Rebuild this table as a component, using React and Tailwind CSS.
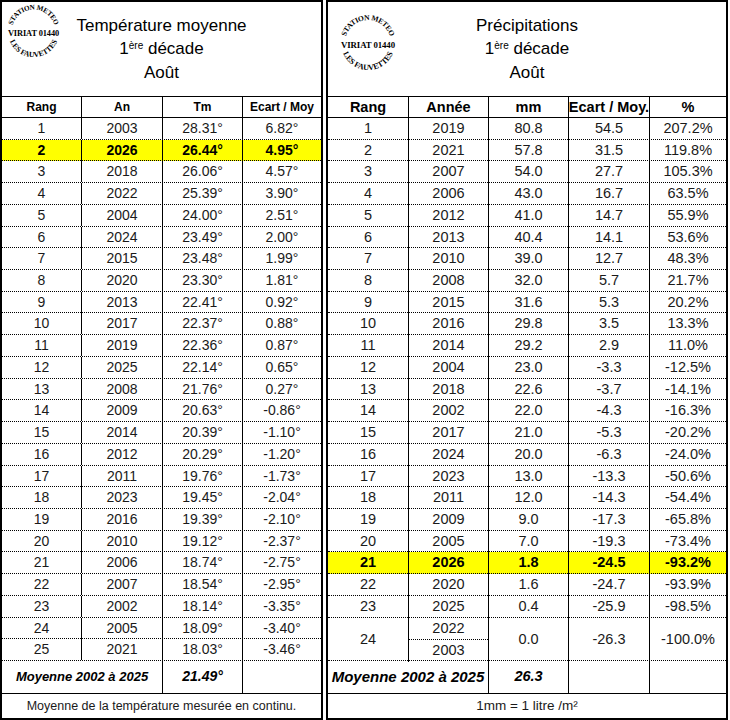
import { useId } from 'react'

const tempRows = [
  [1, '2003', '28.31°', '6.82°'],
  [2, '2026', '26.44°', '4.95°'],
  [3, '2018', '26.06°', '4.57°'],
  [4, '2022', '25.39°', '3.90°'],
  [5, '2004', '24.00°', '2.51°'],
  [6, '2024', '23.49°', '2.00°'],
  [7, '2015', '23.48°', '1.99°'],
  [8, '2020', '23.30°', '1.81°'],
  [9, '2013', '22.41°', '0.92°'],
  [10, '2017', '22.37°', '0.88°'],
  [11, '2019', '22.36°', '0.87°'],
  [12, '2025', '22.14°', '0.65°'],
  [13, '2008', '21.76°', '0.27°'],
  [14, '2009', '20.63°', '-0.86°'],
  [15, '2014', '20.39°', '-1.10°'],
  [16, '2012', '20.29°', '-1.20°'],
  [17, '2011', '19.76°', '-1.73°'],
  [18, '2023', '19.45°', '-2.04°'],
  [19, '2016', '19.39°', '-2.10°'],
  [20, '2010', '19.12°', '-2.37°'],
  [21, '2006', '18.74°', '-2.75°'],
  [22, '2007', '18.54°', '-2.95°'],
  [23, '2002', '18.14°', '-3.35°'],
  [24, '2005', '18.09°', '-3.40°'],
  [25, '2021', '18.03°', '-3.46°'],
]

const rainRows = [
  [1, '2019', '80.8', '54.5', '207.2%'],
  [2, '2021', '57.8', '31.5', '119.8%'],
  [3, '2007', '54.0', '27.7', '105.3%'],
  [4, '2006', '43.0', '16.7', '63.5%'],
  [5, '2012', '41.0', '14.7', '55.9%'],
  [6, '2013', '40.4', '14.1', '53.6%'],
  [7, '2010', '39.0', '12.7', '48.3%'],
  [8, '2008', '32.0', '5.7', '21.7%'],
  [9, '2015', '31.6', '5.3', '20.2%'],
  [10, '2016', '29.8', '3.5', '13.3%'],
  [11, '2014', '29.2', '2.9', '11.0%'],
  [12, '2004', '23.0', '-3.3', '-12.5%'],
  [13, '2018', '22.6', '-3.7', '-14.1%'],
  [14, '2002', '22.0', '-4.3', '-16.3%'],
  [15, '2017', '21.0', '-5.3', '-20.2%'],
  [16, '2024', '20.0', '-6.3', '-24.0%'],
  [17, '2023', '13.0', '-13.3', '-50.6%'],
  [18, '2011', '12.0', '-14.3', '-54.4%'],
  [19, '2009', '9.0', '-17.3', '-65.8%'],
  [20, '2005', '7.0', '-19.3', '-73.4%'],
  [21, '2026', '1.8', '-24.5', '-93.2%'],
  [22, '2020', '1.6', '-24.7', '-93.9%'],
  [23, '2025', '0.4', '-25.9', '-98.5%'],
]

// round stamp of the weather station
function Logo({ size }) {
  const id = useId().replace(/:/g, '')
  return (
    <svg width={size} height={size} viewBox="0 0 60 60" className="block">
      <defs>
        {/* top arc, 195deg -> 345deg, r 23 */}
        <path id={`top${id}`} d="M 7.78 24.05 A 23 23 0 0 1 52.22 24.05" />
        {/* bottom arc, 162deg -> 18deg, r 27 */}
        <path id={`bot${id}`} d="M 4.32 38.34 A 27 27 0 0 0 55.68 38.34" />
      </defs>
      <g fill="#000" fontFamily="'Liberation Serif', serif" fontWeight="bold">
        <text textAnchor="middle" fontSize="7.5" letterSpacing="-0.3">
          <textPath href={`#top${id}`} startOffset="50%">
            STATION METEO
          </textPath>
        </text>
        <text x="30" y="35" textAnchor="middle" fontSize="8.8" letterSpacing="-0.1">
          VIRIAT 01440
        </text>
        <text textAnchor="middle" fontSize="8" letterSpacing="-0.1">
          <textPath href={`#bot${id}`} startOffset="50%">
            LES FAUVETTES
          </textPath>
        </text>
      </g>
    </svg>
  )
}

function Title({ children }) {
  return (
    <div className="flex flex-col items-center justify-center text-[17px] leading-[23.5px] text-black">
      <span>{children}</span>
      <span>
        1<sup className="text-[10px]">ère</sup> décade
      </span>
      <span>Août</span>
    </div>
  )
}

function TemperaturePanel() {
  const cols = 'grid grid-cols-[80px_81px_80px_1fr]'
  const heads = ['Rang', 'An', 'Tm', 'Ecart / Moy']

  return (
    <div className="w-[323px] h-[720px] border-2 border-black flex flex-col shrink-0">
      <div className="grid grid-cols-[62px_1fr_62px] h-[95px] border-b border-black">
        <div className="pl-[3px] pt-[1px]">
          <Logo size={57} />
        </div>
        <Title>Température moyenne</Title>
        <div />
      </div>

      {/* Header */}
      <div className={`${cols} h-[21px] border-b border-black text-[12px] font-bold`}>
        {heads.map((h, i) => (
          <div key={h} className={`flex items-center justify-center ${i < 3 ? 'border-r border-black' : ''}`}>
            {h}
          </div>
        ))}
      </div>

      {/* Rows */}
      {tempRows.map(row => {
        const hl = row[0] === 2
        return (
          <div
            key={row[0]}
            className={`${cols} h-[21.72px] border-b border-dotted border-black text-[14px] ${hl ? 'bg-[#ffff00] font-bold text-black' : 'text-[#1a1a1a]'}`}
          >
            {row.map((v, i) => (
              <div key={i} className={`flex items-center justify-center ${i < 3 ? 'border-r border-black' : ''}`}>
                {v}
              </div>
            ))}
          </div>
        )
      })}

      {/* Average */}
      <div className={`${cols} h-[33px] border-b border-black text-[13px] font-bold italic`}>
        <div className="col-span-2 flex items-center justify-center border-r border-black">Moyenne 2002 à 2025</div>
        <div className="flex items-center justify-center border-r border-black text-[14px]">21.49°</div>
        <div />
      </div>

      <div className="flex-1 flex items-center justify-center text-[12.5px] text-[#1a1a1a]">
        Moyenne de la température mesurée en continu.
      </div>
    </div>
  )
}

function RainPanel() {
  const cols = 'grid grid-cols-[81px_80px_80px_81px_1fr]'
  const heads = ['Rang', 'Année', 'mm', 'Ecart / Moy.', '%']

  return (
    <div className="w-[402px] h-[720px] border-2 border-black flex flex-col ml-[3px] shrink-0">
      <div className="grid grid-cols-[75px_1fr_75px] h-[95px] border-b border-black">
        <div className="pl-[10px] pt-[11px]">
          <Logo size={60} />
        </div>
        <Title>Précipitations</Title>
        <div />
      </div>

      {/* Header */}
      <div className={`${cols} h-[21px] border-b border-black text-[14.5px] font-bold`}>
        {heads.map((h, i) => (
          <div key={h} className={`flex items-center justify-center whitespace-nowrap ${i < 4 ? 'border-r border-black' : ''}`}>
            {h}
          </div>
        ))}
      </div>

      {/* Rows */}
      {rainRows.map(row => {
        const hl = row[0] === 21
        return (
          <div
            key={row[0]}
            className={`${cols} h-[21.72px] border-b border-dotted border-black text-[14.5px] ${hl ? 'bg-[#ffff00] font-bold text-black' : 'text-[#1a1a1a]'}`}
          >
            {row.map((v, i) => (
              <div key={i} className={`flex items-center justify-center ${i < 4 ? 'border-r border-black' : ''}`}>
                {v}
              </div>
            ))}
          </div>
        )
      })}

      {/* Rank 24, two years tied */}
      <div className={`${cols} h-[43.44px] border-b border-dotted border-black text-[14.5px] text-[#1a1a1a]`}>
        <div className="flex items-center justify-center border-r border-black">24</div>
        <div className="flex flex-col border-r border-black">
          <div className="flex-1 flex items-center justify-center border-b border-dotted border-black">2022</div>
          <div className="flex-1 flex items-center justify-center">2003</div>
        </div>
        <div className="flex items-center justify-center border-r border-black">0.0</div>
        <div className="flex items-center justify-center border-r border-black">-26.3</div>
        <div className="flex items-center justify-center">-100.0%</div>
      </div>

      {/* Average */}
      <div className={`${cols} h-[33px] border-b border-black text-[15px] font-bold italic`}>
        <div className="col-span-2 flex items-center justify-center border-r border-black whitespace-nowrap">Moyenne 2002 à 2025</div>
        <div className="flex items-center justify-center border-r border-black text-[14.5px]">26.3</div>
        <div className="border-r border-black" />
        <div />
      </div>

      <div className="flex-1 flex items-center justify-center text-[13.5px] text-[#1a1a1a]">
        1mm = 1 litre /m²
      </div>
    </div>
  )
}

export default function App() {
  return (
    <div className="w-[730px] h-[720px] bg-white flex font-['Liberation_Sans',Arial,sans-serif] overflow-hidden">
      <TemperaturePanel />
      <RainPanel />
    </div>
  )
}
